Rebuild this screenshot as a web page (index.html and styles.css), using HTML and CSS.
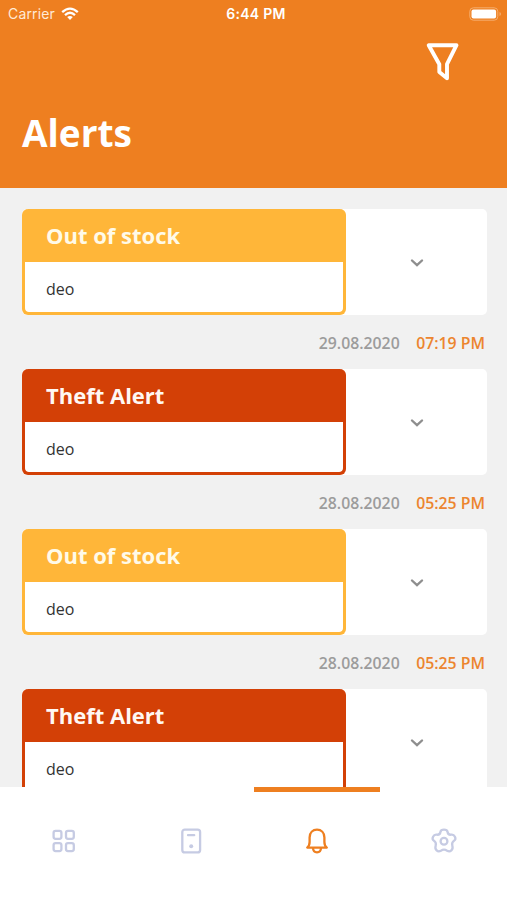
FILE: index.html
```html
<!DOCTYPE html>
<html lang="en">
<head>
<meta charset="utf-8">
<title>Alerts</title>
<link rel="stylesheet" href="styles.css">
</head>
<body>
<svg class="symbols" aria-hidden="true">
  <symbol id="chevron" viewBox="0 0 14 10"><path d="M2 2.5 7 7.2 12 2.5" fill="none" stroke="currentColor" stroke-width="2.4" stroke-linecap="round"/></symbol>
</svg>
<div class="screen">
  <header class="header">
    <div class="status">
      <div class="carrier"><span>Carrier</span>
        <svg width="18" height="14" viewBox="0 0 18 14" fill="none" stroke="#fff" stroke-width="2.3"><path d="M1.2 5.2Q9-2 16.8 5.2M4 8.1Q9 3.5 14 8.1"/><path d="M6.2 10.1Q9 7.7 11.8 10.1L9 13Z" fill="#fff" stroke="none"/></svg>
      </div>
      <span class="clock">6:44 PM</span>
      <svg class="battery" width="33" height="14" viewBox="0 0 33 14"><rect x=".8" y=".8" width="28" height="12.4" rx="3.6" fill="none" stroke="#f5ad6d"/><rect x="2.5" y="2.5" width="24.6" height="9" rx="2" fill="#fff"/><path d="M30.5 5v4q1.5-.6 1.5-2t-1.5-2" fill="#f5ad6d"/></svg>
    </div>
    <svg class="filter" width="36" height="40" viewBox="0 0 36 40" fill="none" stroke="#fff" stroke-width="3.9" stroke-linejoin="round"><path d="M3.7 3.2H31.5L22 22.2V36.2L14.3 30V22.2Z"/></svg>
    <h1>Alerts</h1>
  </header>
  <main class="list">
    <article class="alert stock">
      <div class="card"><section class="summary"><h2>Out of stock</h2><p>deo</p></section><div class="toggle"><svg><use href="#chevron"/></svg></div></div>
      <div class="stamp"><span>29.08.2020</span><time>07:19 PM</time></div>
    </article>
    <article class="alert theft">
      <div class="card"><section class="summary"><h2>Theft Alert</h2><p>deo</p></section><div class="toggle"><svg><use href="#chevron"/></svg></div></div>
      <div class="stamp"><span>28.08.2020</span><time>05:25 PM</time></div>
    </article>
    <article class="alert stock">
      <div class="card"><section class="summary"><h2>Out of stock</h2><p>deo</p></section><div class="toggle"><svg><use href="#chevron"/></svg></div></div>
      <div class="stamp"><span>28.08.2020</span><time>05:25 PM</time></div>
    </article>
    <article class="alert theft">
      <div class="card"><section class="summary"><h2>Theft Alert</h2><p>deo</p></section><div class="toggle"><svg><use href="#chevron"/></svg></div></div>
    </article>
  </main>
  <nav class="tabs">
    <div class="tab"><svg viewBox="0 0 28 28"><rect x="4.6" y="3.8" width="7.8" height="8" rx="2"/><rect x="17" y="3.8" width="7.8" height="8" rx="2"/><rect x="4.6" y="16.1" width="7.8" height="8" rx="2"/><rect x="17" y="16.1" width="7.8" height="8" rx="2"/></svg></div>
    <div class="tab"><svg viewBox="0 0 28 28"><rect x="6.3" y="2.6" width="17.8" height="22.8" rx="2.5"/><path d="M12 8.2h6.2"/><circle cx="15.2" cy="19.3" r="2" class="dot"/></svg></div>
    <div class="tab active"><svg viewBox="0 0 28 28"><path d="M4.2 20.6Q6.6 18.8 6.6 15V10.5C6.6 5.6 9.8 2.7 14 2.7S21.4 5.6 21.4 10.5V15Q21.4 18.8 23.8 20.6ZM10 21C10.2 26.8 17.8 26.8 18 21"/></svg></div>
    <div class="tab"><svg viewBox="0 0 28 28"><path d="M10.4 5C11 1.9 17 1.9 17.6 5Q18 8 21 7.7C24.6 7 26.8 11.8 24.2 13.6Q21.4 15.5 22.3 18.5C23.6 22.7 20.2 25.6 17.2 23.8Q14 21.4 10.8 23.8C7.8 25.6 4.4 22.7 5.7 18.5Q6.6 15.5 3.8 13.6C1.2 11.8 3.4 7 7 7.7Q10 8 10.4 5Z"/><circle cx="14" cy="14.3" r="3.4"/></svg></div>
  </nav>
</div>
</body>
</html>
```

FILE: styles.css
```css
* { box-sizing: border-box; }
body { margin: 0; font-family: "Open Sans", sans-serif; }
h1, h2, p { margin: 0; }
.symbols { display: none; }
.screen { height: 900px; display: flex; flex-direction: column; background: #f1f1f1; overflow: hidden; }
.header { height: 187.5px; flex: none; display: flex; flex-direction: column; background: #ee7f20; color: #fff; }
.status { height: 27px; display: grid; grid-template-columns: 1fr auto 1fr; align-items: center; padding: 0 5px 0 8px; font-family: Inter, sans-serif; font-size: 14px; }
.carrier { display: flex; align-items: center; gap: 6px; color: #ffead7; letter-spacing: .15px; }
.clock { margin-left: 2px; font-weight: 600; font-size: 14px; letter-spacing: .3px; }
.battery { justify-self: end; }
.filter { align-self: flex-end; margin: 15px 46px 0 0; }
h1 { margin: 25px 0 0 22px; font-size: 37px; line-height: 52px; font-weight: 700; }
.list { height: 599.5px; flex: none; overflow: hidden; padding: 21px 20px 0 22px; }
.alert { height: 160px; --tone: #ffb639; --heading: #fffae8; }
.theft { --tone: #d34006; --heading: #fff8f4; }
.card { height: 106.5px; display: flex; background: #fff; border-radius: 5px; }
.summary { width: 324px; border: 3px solid var(--tone); border-top: 0; border-radius: 6px; overflow: hidden; background: var(--tone); display: flex; flex-direction: column; }
h2 { flex: none; height: 53px; padding-left: 21px; font-size: 22px; line-height: 52px; font-weight: 700; color: var(--heading); }
.summary p { flex: 1; min-height: 0; padding-left: 21px; background: #fff; border-radius: 0 0 4px 4px; font-size: 16px; line-height: 54px; color: #333; }
.toggle { flex: 1; display: flex; align-items: center; justify-content: center; padding-top: 2px; color: #8e8e8e; }
.toggle svg { width: 14px; height: 10px; }
.stamp { display: flex; justify-content: flex-end; gap: 16.5px; padding: 16.5px 2px 0 0; font-size: 15.8px; line-height: 22px; font-weight: 600; color: #9c9c9c; }
.stamp time { color: #ec852f; }
.tabs { flex: 1; display: grid; grid-template-columns: repeat(4, 1fr); background: #fff; }
.tab { display: flex; justify-content: center; padding-top: 35px; border-top: 5px solid transparent; }
.tab svg { width: 28px; height: 28px; fill: none; stroke: #c6cbe3; stroke-width: 2.3; stroke-linejoin: round; stroke-linecap: round; }
.tab .dot { fill: #c6cbe3; stroke: none; }
.tab.active { border-color: #ee7f20; }
.tab.active svg { stroke: #ee7f20; }
```
